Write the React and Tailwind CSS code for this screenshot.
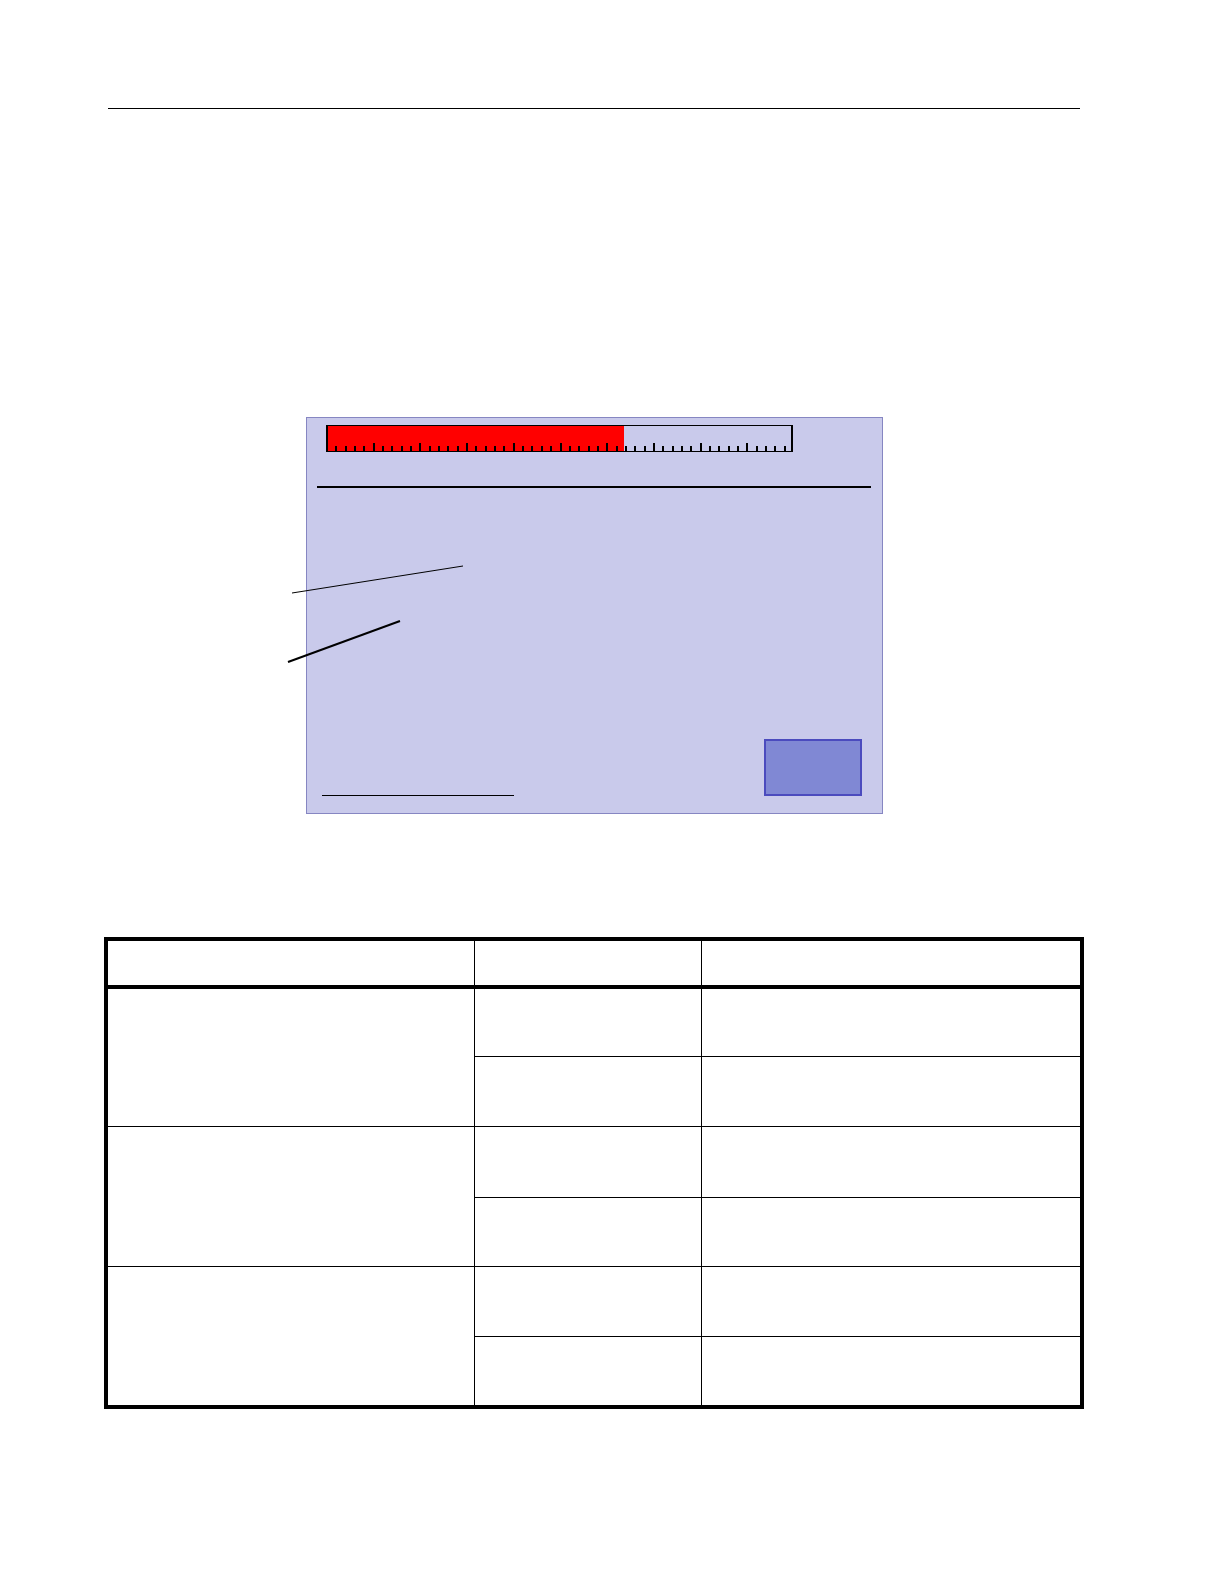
import React from "react";

const FILL_PERCENT = 64;
const TICKS = Array.from({ length: 49 }, (_, i) => i + 1);

// each group is one tall cell with two rows beside it
const GROUPS = [
  ["h-[68px]", "h-[70px]"],
  ["h-[71px]", "h-[69px]"],
  ["h-[70px]", "h-[68px]"],
];

const Gauge = () => (
  <div className="relative ml-[19px] mr-[89px] h-[27px] border-x-2 border-y border-black">
    <div className="h-full bg-[#ff0000]" style={{ width: `${FILL_PERCENT}%` }} />
    <svg
      className="absolute inset-0 w-full h-full"
      viewBox="0 0 463 25"
      preserveAspectRatio="none"
      shapeRendering="crispEdges"
      aria-hidden="true"
    >
      {TICKS.map((i) => {
        const major = i % 5 === 0;
        return (
          <rect
            key={i}
            x={Math.round(i * 9.34 - 2)}
            y={major ? 17 : 20}
            width="2"
            height={major ? 8 : 5}
          />
        );
      })}
    </svg>
  </div>
);

const Screen = () => (
  <figure className="relative ml-[202px] mr-[201px] mt-[308px]">
    <div className="border border-[#8686c2] bg-[#c9caeb] pt-[7px] pb-[17px]">
      <Gauge />
      <hr className="ml-[10px] mr-[11px] mt-[34px] border-0 h-[2px] bg-black" />
      <div className="flex items-end justify-between mt-[251px] ml-[15px] mr-5">
        <hr className="w-48 border-0 h-px bg-black" />
        <button
          type="button"
          aria-label="Select"
          className="w-[98px] h-[57px] border-2 border-[#4b4bbe] bg-[#8088d4]"
        />
      </div>
    </div>

    {/* leader lines */}
    <svg
      className="absolute -left-5 top-36"
      width="180"
      height="110"
      stroke="black"
      aria-hidden="true"
    >
      <line x1="6" y1="32" x2="177" y2="5" strokeWidth="1" />
      <line x1="2" y1="101" x2="114" y2="60" strokeWidth="2" />
    </svg>
  </figure>
);

const Cells = () => (
  <>
    <td className="border-r border-b border-black" />
    <td className="border-b border-black" />
  </>
);

const App = () => {
  return (
    <main className="min-h-screen bg-white pt-[108px] pb-[175px] pl-[104px] pr-[140px] font-['Liberation_Sans',sans-serif]">
      <hr className="mx-1 border-0 h-px bg-black" />

      <Screen />

      <table className="mt-[123px] w-full table-fixed border-separate border-spacing-0 border-4 border-black">
        <colgroup>
          <col className="w-[367px]" />
          <col className="w-[227px]" />
          <col />
        </colgroup>
        <thead>
          <tr className="h-12">
            <th className="p-0 border-r border-b-4 border-black" />
            <th className="p-0 border-r border-b-4 border-black" />
            <th className="p-0 border-b-4 border-black" />
          </tr>
        </thead>
        {GROUPS.map(([first, second], i) => (
          <tbody key={i} className="[&_td]:p-0 last:[&_td[rowspan]]:border-b-0 last:[&_tr:last-child_td]:border-b-0">
            <tr className={first}>
              <td rowSpan={2} className="border-r border-b border-black" />
              <Cells />
            </tr>
            <tr className={second}>
              <Cells />
            </tr>
          </tbody>
        ))}
      </table>
    </main>
  );
};

export default App;
